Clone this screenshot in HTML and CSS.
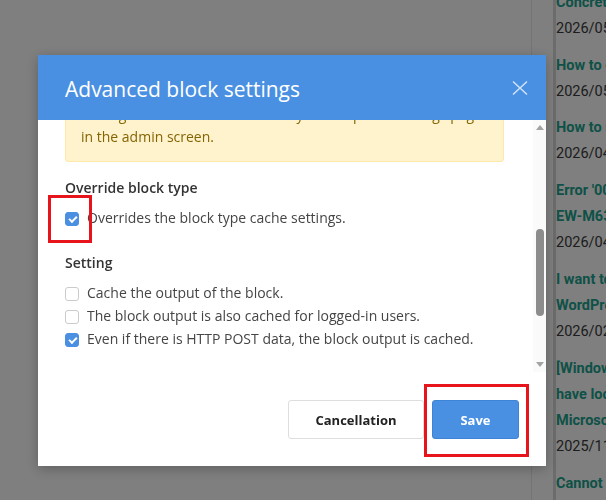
FILE: index.html
```html
<!DOCTYPE html>
<html>
<head>
  <meta charset="utf-8">
  <title>Advanced block settings</title>
  <link rel="stylesheet" href="styles.css">
</head>
<body>
  <!-- Page under the dialog -->
  <div class="page">
    <div class="main"></div>
    <aside class="side">
      <ul class="recent">
        <li><a href="#">Concrete CMS cache settings</a><span class="date">2026/05/21</span></li>
        <li><a href="#">How to change the block</a><span class="date">2026/05/08</span></li>
        <li><a href="#">How to use the page list</a><span class="date">2026/04/27</span></li>
        <li><a href="#">Error '0050' on the<br>EW-M634T printer</a><span class="date">2026/04/10</span></li>
        <li><a href="#">I want to move my<br>WordPress site</a><span class="date">2026/02/16</span></li>
        <li><a href="#">[Windows 11] I<br>have locked my<br>Microsoft account</a><span class="date">2025/11/30</span></li>
        <li><a href="#">Cannot log in</a><span class="date">2025/11/02</span></li>
      </ul>
    </aside>
  </div>

  <!-- Advanced block settings dialog -->
  <div class="overlay">
    <div class="dialog">
      <div class="dialog-head">
        <h2>Advanced block settings</h2>
        <button class="close" type="button">
          <svg width="16" height="16" viewBox="0 0 16 16"><path d="M1 1.5L15 14.5M15 1.5L1 14.5" stroke="currentColor" stroke-width="1.5" fill="none"/></svg>
        </button>
      </div>

      <div class="dialog-body">
        <div class="scroll">
          <div class="notice">
            Settings are reflected immediately on the portal settings page<br>in the admin screen.
          </div>

          <div class="group">
            <h3>Override block type</h3>
            <label class="check"><span class="box on"></span>Overrides the block type cache settings.</label>
          </div>

          <div class="group">
            <h3>Setting</h3>
            <label class="check"><span class="box"></span>Cache the output of the block.</label>
            <label class="check"><span class="box"></span>The block output is also cached for logged-in users.</label>
            <label class="check"><span class="box on"></span>Even if there is HTTP POST data, the block output is cached.</label>
          </div>
        </div>

        <div class="scrollbar">
          <span class="arrow"><i class="up"></i></span>
          <span class="track"><span class="thumb"></span></span>
          <span class="arrow"><i class="down"></i></span>
        </div>
      </div>

      <div class="dialog-foot">
        <button class="btn" type="button">Cancellation</button>
        <button class="btn primary" type="button">Save</button>
      </div>

      <!-- red callouts -->
      <span class="mark mark-check"></span>
      <span class="mark mark-save"></span>
    </div>
  </div>
</body>
</html>
```

FILE: styles.css
```css
* {
  box-sizing: border-box;
}
body {
  margin: 0;
  height: 500px;
  overflow: hidden;
  background: #fff;
  font-family: Roboto, "Liberation Sans", sans-serif;
}

/* Page layout behind the dialog */
.page {
  display: flex;
  height: 500px;
}
.main {
  flex: none;
  width: 532px;
  border-right: 1px solid #e8e8e8;
}
.side {
  flex: none;
  width: 300px;
  margin-left: 21px;
  border-left: 3px solid #d9d9d9;
}
.recent {
  list-style: none;
  margin: -10px 0 0;
  padding: 0;
}
.recent li {
  margin-bottom: 10px;
  font-size: 14.5px;
  line-height: 26.3px;
}
.recent a {
  display: block;
  color: #1ca38e;
  font-weight: 700;
  text-decoration: none;
  white-space: nowrap;
}
.recent .date {
  display: block;
  color: #3a3a3a;
}

/* Dark backdrop */
.overlay {
  position: fixed;
  inset: 0;
  background: rgba(0, 0, 0, 0.5);
  padding: 55px 0 0 38px;
  font-family: "Open Sans", "Noto Sans", sans-serif;
}
.dialog {
  position: relative;
  width: 508px;
  background: #fff;
  box-shadow: 0 3px 12px rgba(0, 0, 0, 0.25);
}

/* Header */
.dialog-head {
  position: relative;
  z-index: 1;
  display: flex;
  align-items: center;
  justify-content: space-between;
  height: 65px;
  padding: 0 18px 0 27px;
  background: #4a90e2;
}
.dialog-head h2 {
  margin: 0;
  padding-top: 2px;
  font-size: 21px;
  font-weight: 400;
  color: #fff;
}
.close {
  display: flex;
  padding: 0;
  border: none;
  background: none;
  color: rgba(255, 255, 255, 0.75);
}

/* Scrolling body */
.dialog-body {
  display: flex;
  height: 252px;
}
.scroll {
  flex: 1;
  overflow: hidden;
  padding: 0 29px 0 27px;
  font-size: 14px;
}
.notice {
  margin-top: -29px;
  padding: 12px 15px 13px;
  border: 1px solid #ffe9a8;
  border-radius: 3px;
  background: #fff3cd;
  color: #856404;
  line-height: 22px;
  white-space: nowrap;
}
.group {
  margin-top: 23px;
}
.notice + .group {
  margin-top: 15px;
}
.group h3 {
  margin: 0 0 8px;
  font-size: 14px;
  font-weight: 600;
  line-height: 21px;
  color: #333;
}
.check {
  display: flex;
  align-items: flex-start;
  gap: 8px;
  line-height: 23px;
  color: #454545;
}
.box {
  position: relative;
  flex: none;
  width: 14px;
  height: 14px;
  margin-top: 6px;
  border: 1px solid #cbcbcb;
  border-radius: 3px;
  background: #fff;
}
.box.on {
  background: #4a8fe2;
  border-color: #4a8fe2;
}
.box.on::after {
  content: "";
  position: absolute;
  left: 3px;
  top: 3px;
  width: 6px;
  height: 3px;
  border-left: 2px solid #fff;
  border-bottom: 2px solid #fff;
  transform: rotate(-45deg);
}

/* Scrollbar column */
.scrollbar {
  flex: none;
  display: flex;
  flex-direction: column;
  width: 13px;
  background: #fafafa;
}
.arrow {
  display: flex;
  align-items: center;
  justify-content: center;
  height: 15px;
}
.arrow i {
  width: 0;
  height: 0;
  border-left: 4px solid transparent;
  border-right: 4px solid transparent;
}
.arrow .up {
  border-bottom: 5px solid #a3a3a3;
}
.arrow .down {
  border-top: 5px solid #a3a3a3;
}
.track {
  flex: 1;
  display: flex;
  justify-content: center;
}
.thumb {
  width: 8px;
  height: 87px;
  margin-top: 94px;
  border-radius: 4px;
  background: #8c8c8c;
}

/* Footer buttons */
.dialog-foot {
  display: flex;
  justify-content: flex-end;
  gap: 8px;
  padding: 28px 27px 27px;
}
.btn {
  width: 136px;
  height: 39px;
  border: 1px solid #dedede;
  border-radius: 3px;
  background: #fff;
  color: #222;
  font-family: "Open Sans", "Noto Sans", sans-serif;
  font-size: 13px;
  font-weight: 700;
}
.btn.primary {
  width: 87px;
  background: #4a90e2;
  border-color: #3e84d6;
  color: #fff;
}

/* Red highlight frames */
.mark {
  position: absolute;
  z-index: 2;
  border: 3px solid #e8141c;
}
.mark-check {
  left: 10px;
  top: 140px;
  width: 44px;
  height: 48px;
}
.mark-save {
  left: 386px;
  top: 329px;
  width: 105px;
  height: 73px;
}
```
